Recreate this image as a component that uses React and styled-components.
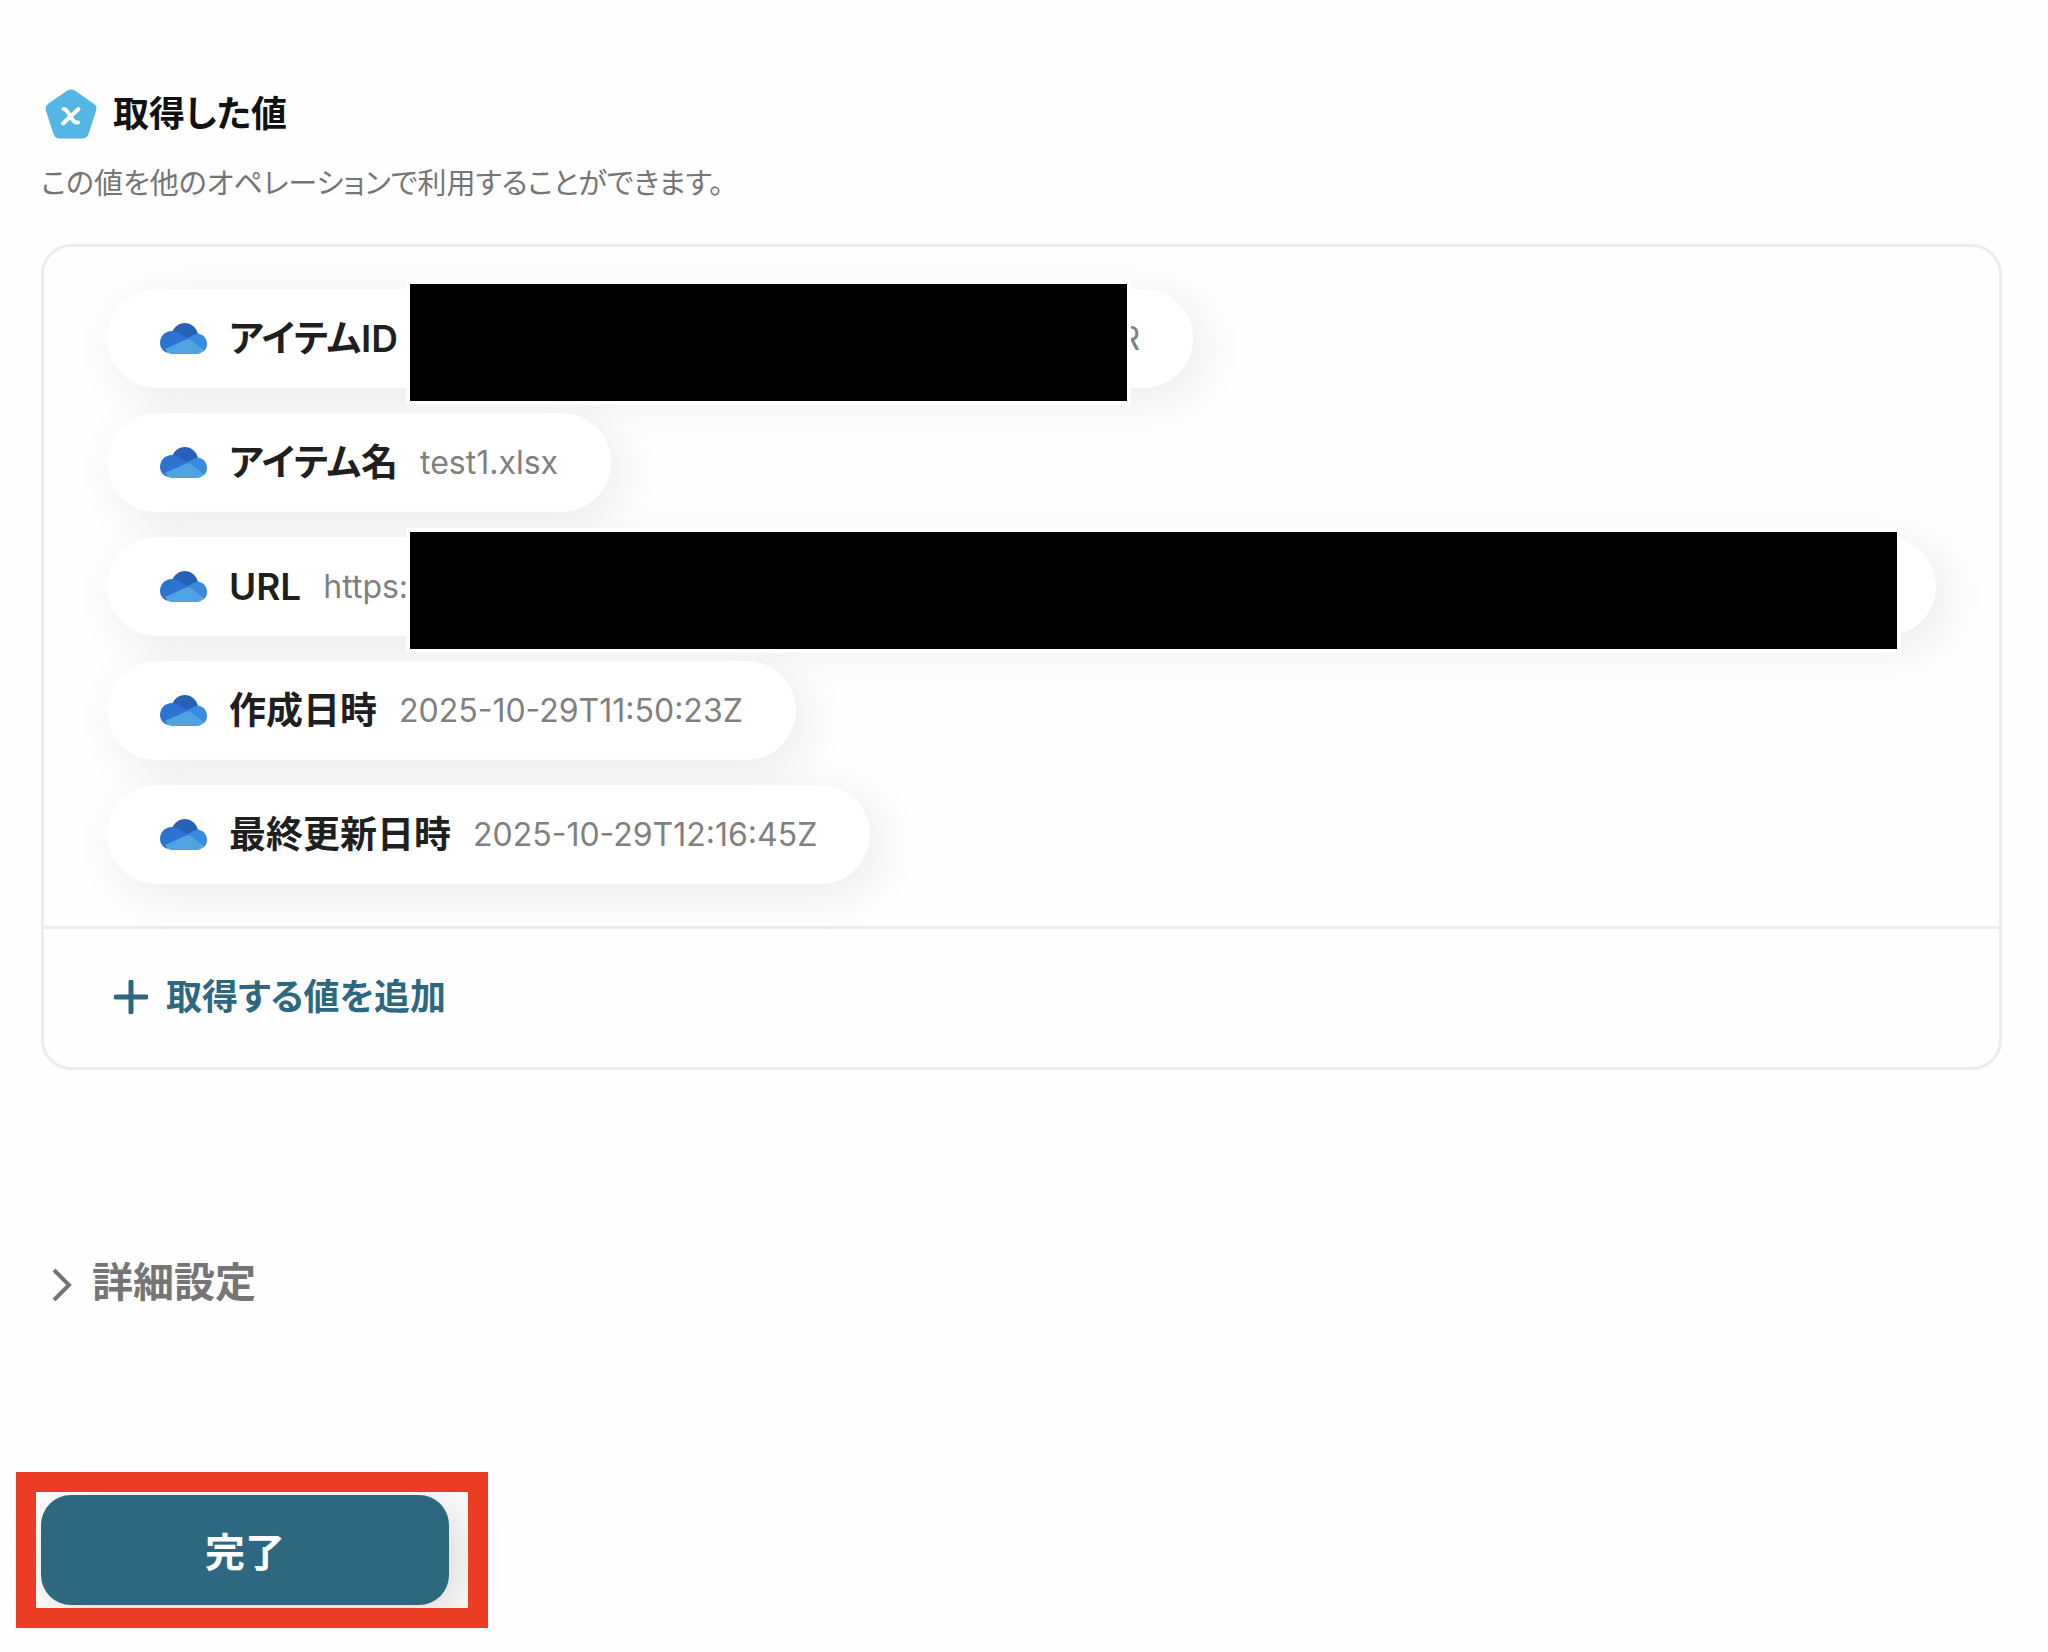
import React from 'react';
import styled, { createGlobalStyle } from 'styled-components';

const GlobalStyle = createGlobalStyle`
  *, *::before, *::after {
    box-sizing: border-box;
  }
  body {
    margin: 0;
    background: #fefefe;
    color: #1f1f1f;
    font-family: Inter, 'Noto Sans CJK JP', sans-serif;
    font-feature-settings: 'palt';
  }
  button {
    font: inherit;
    font-feature-settings: inherit;
    border: 0;
    padding: 0;
    background: none;
    cursor: pointer;
  }
`;

const StyledWrapper = styled.main`
  display: flex;
  flex-direction: column;
  align-items: flex-start;
  padding: 84px 46px 0 41px;
`;

const Heading = styled.h2`
  display: flex;
  align-items: center;
  gap: 16px;
  height: 60px;
  margin: 0;
  padding-left: 4px;
  font-size: 36px;
  line-height: 48px;
  font-weight: 600;
  color: #111;
`;

const Description = styled.p`
  margin: 20px 0 40px;
  font-size: 29px;
  line-height: 40px;
  color: #757575;
`;

const Panel = styled.section`
  width: 100%;
  border: 3px solid #ececec;
  border-radius: 30px;
`;

const StyledList = styled.ul`
  display: flex;
  flex-direction: column;
  align-items: flex-start;
  gap: 25px;
  margin: 0;
  padding: 42px 63px;
  list-style: none;
`;

const StyledListItem = styled.li`
  position: relative;
  display: flex;
  align-items: center;
  width: ${({ $full }) => ($full ? '100%' : 'auto')};
  max-width: 100%;
  height: 99px;
  padding: 0 53px;
  border-radius: 50px;
  background: #fff;
  box-shadow: 10px 10px 48px rgba(0, 0, 0, 0.08);
  white-space: nowrap;
`;

const Label = styled.span`
  margin: 0 22px;
  font-size: 37px;
  line-height: 48px;
  font-weight: 600;
`;

const Value = styled.span`
  min-width: ${({ $width }) => $width || 0};
  font-size: 32px;
  text-align: ${({ $width }) => ($width ? 'right' : 'left')};
  color: #808080;
`;

const Redaction = styled.span`
  position: absolute;
  top: -5px;
  left: 303px;
  right: ${({ $right }) => $right};
  height: 117px;
  background: #000;
  box-shadow: 0 0 0 4px #fff;
`;

const Footer = styled.div`
  padding: 41px 70px 43px;
  border-top: 3px solid #ececec;
`;

const AddButton = styled.button`
  display: flex;
  align-items: center;
  gap: 18px;
  height: 54px;
  font-size: 36px;
  line-height: 48px;
  font-weight: 600;
  color: #2d6880;
`;

const DetailsButton = styled.button`
  display: flex;
  align-items: center;
  gap: 20px;
  height: 60px;
  margin: 179px 0 0 11px;
  font-size: 41px;
  font-weight: 600;
  color: #757575;
`;

const Highlight = styled.div`
  position: relative;
  margin: 163px 0 0 -25px;
  padding: 23px 39px 23px 25px;

  /* the frame stays above the shadow of the button */
  &::after {
    content: '';
    position: absolute;
    inset: 0;
    border: 20px solid #eb3d23;
    pointer-events: none;
  }
`;

const SubmitButton = styled.button`
  display: block;
  width: 408px;
  height: 110px;
  border-radius: 30px;
  background: #2d6880;
  box-shadow: 10px 10px 48px rgba(0, 0, 0, 0.16);
  font-size: 40px;
  font-weight: 600;
  color: #fff;
`;

const PentagonIcon = () => (
  <svg width="52" height="50" viewBox="0 0 52 50" aria-hidden="true">
    <path
      d="M22 1.8Q26-1 30 1.8L48.500 14.500Q52.500 17.300 51 22L43.500 45Q42 49.500 37 49.500H15Q10 49.500 8.500 45L1 22Q-.500 17.300 3.500 14.500Z"
      fill="#53b6e4"
    />
    <path
      d="M18.500 20C20.500 20 21.500 21 23 23.500L27.500 30.500C29 33 30.500 34 33 33.500M33.500 20L25.500 27.500L18 34.500"
      fill="none"
      stroke="#fff"
      strokeWidth="4"
      strokeLinecap="round"
    />
  </svg>
);

const CloudIcon = () => (
  <svg width="47" height="31" viewBox="0 0 47 31" aria-hidden="true">
    <path d="M12 10C14 3 20 0 25 0C31 0 36 4 38 11L27 18Z" fill="#2460b5" />
    <path d="M10 30C4 30 0 25 0 20C0 13 5 8 12 8C15 8 17 9 19 10L30 17Z" fill="#2f73d0" />
    <path d="M27 15L36 11C42 10 47 15 47 21C47 25 45 28 42 29Z" fill="#3a8be0" />
    <path d="M5 26L25 17Q29 15 32 18L44 27Q41 31 37 31H11Q7 30 5 26Z" fill="#4fa3e3" />
  </svg>
);

const PlusIcon = () => (
  <svg width="34" height="34" viewBox="0 0 34 34" aria-hidden="true">
    <path d="M17 2V32M2 17H32" stroke="#2d6880" strokeWidth="5" strokeLinecap="round" />
  </svg>
);

const ChevronIcon = () => (
  <svg width="20" height="44" viewBox="0 0 20 44" aria-hidden="true">
    <path d="M2 13L17 28L2 43" fill="none" stroke="#757575" strokeWidth="4" />
  </svg>
);

const items = [
  { label: 'アイテムID', value: 'R', width: '720px', redacted: '66px' },
  { label: 'アイテム名', value: 'test1.xlsx' },
  { label: 'URL', value: 'https:', full: true, redacted: '39px' },
  { label: '作成日時', value: '2025-10-29T11:50:23Z' },
  { label: '最終更新日時', value: '2025-10-29T12:16:45Z' },
];

const App = () => (
  <>
    <GlobalStyle />
    <StyledWrapper>
      <Heading>
        <PentagonIcon />
        取得した値
      </Heading>
      <Description>この値を他のオペレーションで利用することができます。</Description>
      <Panel>
        <StyledList>
          {items.map(item => (
            <StyledListItem key={item.label} $full={item.full}>
              <CloudIcon />
              <Label>{item.label}</Label>
              <Value $width={item.width}>{item.value}</Value>
              {item.redacted ? <Redaction $right={item.redacted} /> : null}
            </StyledListItem>
          ))}
        </StyledList>
        <Footer>
          <AddButton type="button">
            <PlusIcon />
            取得する値を追加
          </AddButton>
        </Footer>
      </Panel>
      <DetailsButton type="button" aria-expanded="false">
        <ChevronIcon />
        詳細設定
      </DetailsButton>
      <Highlight>
        <SubmitButton type="button">完了</SubmitButton>
      </Highlight>
    </StyledWrapper>
  </>
);

export default App;
